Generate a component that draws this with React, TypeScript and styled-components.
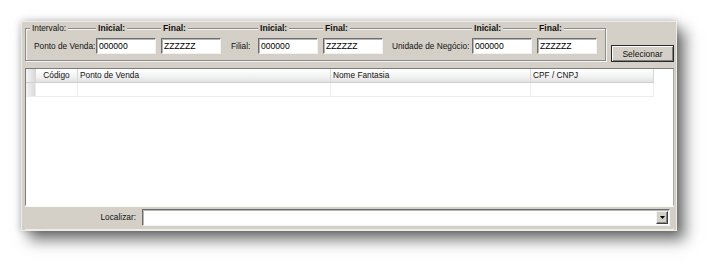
import React from "react";
import styled, { createGlobalStyle } from "styled-components";

const Global = createGlobalStyle`
  html, body { margin: 0; padding: 0; background: #ffffff; }
  body { font-family: "Liberation Sans", Arial, sans-serif; font-size: 8.3px; color: #000; }
  * { box-sizing: border-box; }
`;

const Page = styled.div`
  width: 719px;
  height: 274px;
  padding: 21px 0 0 21px;
  background: #ffffff;
  overflow: hidden;
`;

const Panel = styled.div`
  width: 656px;
  height: 210px;
  background: #d4d0c8;
  border: 1px solid #eeece7;
  padding: 6px 2px 0 3px;
  display: flex;
  flex-direction: column;
  box-shadow: 8px 9px 14px rgba(0, 0, 0, 0.55), 0 0 7px rgba(0, 0, 0, 0.25);
`;

const TopRow = styled.div`
  display: flex;
  align-items: flex-end;
  gap: 5px;
  height: 33px;
`;

const GroupBox = styled.div`
  width: 581px;
  height: 33px;
  border: 1px solid #8a8a8a;
  box-shadow: inset 1px 1px 0 #f6f5f2, 1px 1px 0 #f6f5f2;
  padding: 0 8px 6px 4px;
  display: flex;
  align-items: flex-start;
`;

const Field = styled.div<{ $w: number; $gap?: number }>`
  display: flex;
  flex-direction: column;
  width: ${(p) => p.$w}px;
  margin-left: ${(p) => p.$gap ?? 0}px;
  flex: none;
`;

const Caption = styled.span<{ $bold?: boolean }>`
  align-self: flex-start;
  height: 10px;
  line-height: 10px;
  margin-top: -6px;
  margin-bottom: 5px;
  padding: 0 2px;
  background: #d4d0c8;
  font-weight: ${(p) => (p.$bold ? 700 : 400)};
  font-size: ${(p) => (p.$bold ? "8.6px" : "8.3px")};
  white-space: nowrap;
  color: #111;
`;

const Spacer = styled.span`
  height: 10px;
  margin-top: -6px;
  margin-bottom: 5px;
`;

const Label = styled.span<{ $pl: number }>`
  height: 16px;
  line-height: 16px;
  padding-left: ${(p) => p.$pl}px;
  white-space: nowrap;
  color: #111;
`;

const TextBox = styled.div`
  height: 16px;
  width: 100%;
  background: #ffffff;
  border-top: 1px solid #6e6e6e;
  border-left: 1px solid #6e6e6e;
  border-right: 1px solid #f2f2f2;
  border-bottom: 1px solid #f2f2f2;
  box-shadow: inset 1px 1px 0 #b4b4b4;
  padding-left: 2px;
  line-height: 14px;
  font-size: 8.6px;
  color: #000;
  white-space: nowrap;
  overflow: hidden;
`;

const Button = styled.button`
  width: 63px;
  height: 17px;
  margin-bottom: -1px;
  padding: 0;
  background: #d4d0c8;
  border: 1px solid #2a2a2a;
  box-shadow: inset 1px 1px 0 #ffffff, inset -1px -1px 0 #808080;
  font-family: "Liberation Sans", Arial, sans-serif;
  font-size: 8.5px;
  color: #111;
  text-align: center;
`;

const Grid = styled.div`
  margin-top: 7px;
  flex: 1;
  background: #ffffff;
  border-top: 1px solid #7c7c7c;
  border-left: 1px solid #7c7c7c;
  border-right: 1px solid #a8a8a8;
  border-bottom: 1px solid #ffffff;
  display: flex;
  flex-direction: column;
  min-height: 0;
`;

const Row = styled.div<{ $header?: boolean }>`
  display: flex;
  height: 14px;
  flex: none;
  border-bottom: 1px solid ${(p) => (p.$header ? "#cfcfcf" : "#ededed")};
  width: 628px;
  background: ${(p) => (p.$header ? "linear-gradient(#ffffff, #f3f3f3 55%, #e2e2e2)" : "#ffffff")};
`;

const Cell = styled.div<{ $w: number; $center?: boolean; $indicator?: boolean; $header?: boolean }>`
  width: ${(p) => p.$w}px;
  flex: none;
  border-right: 1px solid ${(p) => (p.$header ? "#d8d8d8" : "#ededed")};
  padding: 0 2px;
  line-height: 13px;
  font-size: 8.3px;
  color: #111;
  text-align: ${(p) => (p.$center ? "center" : "left")};
  white-space: nowrap;
  overflow: hidden;
  background: ${(p) => (p.$indicator ? "linear-gradient(90deg, #f4f4f4, #d9d9d9)" : "transparent")};
`;

const Bar = styled.div`
  height: 24px;
  flex: none;
  background: #d4d0c8;
  border-top: 1px solid #f8f8f6;
  border-bottom: 1px solid #eeece7;
  display: flex;
  align-items: flex-start;
  padding-top: 2px;
`;

const BarLabel = styled.span`
  width: 114px;
  flex: none;
  text-align: right;
  padding-right: 3px;
  line-height: 17px;
  color: #111;
`;

const Combo = styled.div`
  margin-left: 3px;
  width: 528px;
  height: 17px;
  background: #ffffff;
  border-top: 1px solid #6e6e6e;
  border-left: 1px solid #6e6e6e;
  border-right: 1px solid #f2f2f2;
  border-bottom: 1px solid #f2f2f2;
  box-shadow: inset 1px 1px 0 #b4b4b4;
  display: flex;
  justify-content: flex-end;
  align-items: center;
  padding-right: 1px;
`;

const DropButton = styled.div`
  width: 12px;
  height: 13px;
  background: #d4d0c8;
  border-top: 1px solid #f4f4f4;
  border-left: 1px solid #f4f4f4;
  border-right: 1px solid #404040;
  border-bottom: 1px solid #404040;
  box-shadow: inset -1px -1px 0 #8a8a8a;
  display: flex;
  align-items: center;
  justify-content: center;
`;

const cols = [
  { w: 10, t: "", c: false, ind: true },
  { w: 42, t: "Código", c: true },
  { w: 253, t: "Ponto de Venda" },
  { w: 200, t: "Nome Fantasia" },
  { w: 123, t: "CPF / CNPJ" },
];

export default function App() {
  return (
    <>
      <Global />
      <Page>
        <Panel>
          <TopRow>
            <GroupBox>
              <Field $w={66}>
                <Caption>Intervalo:</Caption>
                <Label $pl={4}>Ponto de Venda:</Label>
              </Field>
              <Field $w={60}>
                <Caption $bold>Inicial:</Caption>
                <TextBox>000000</TextBox>
              </Field>
              <Field $w={60} $gap={5}>
                <Caption $bold>Final:</Caption>
                <TextBox>ZZZZZZ</TextBox>
              </Field>
              <Field $w={37}>
                <Spacer />
                <Label $pl={10}>Filial:</Label>
              </Field>
              <Field $w={60}>
                <Caption $bold>Inicial:</Caption>
                <TextBox>000000</TextBox>
              </Field>
              <Field $w={60} $gap={5}>
                <Caption $bold>Final:</Caption>
                <TextBox>ZZZZZZ</TextBox>
              </Field>
              <Field $w={89}>
                <Spacer />
                <Label $pl={9}>Unidade de Negócio:</Label>
              </Field>
              <Field $w={60}>
                <Caption $bold>Inicial:</Caption>
                <TextBox>000000</TextBox>
              </Field>
              <Field $w={60} $gap={5}>
                <Caption $bold>Final:</Caption>
                <TextBox>ZZZZZZ</TextBox>
              </Field>
            </GroupBox>
            <Button>Selecionar</Button>
          </TopRow>
          <Grid>
            <Row $header>
              {cols.map((c, i) => (
                <Cell key={i} $w={c.w} $center={c.c} $indicator={c.ind} $header>
                  {c.t}
                </Cell>
              ))}
            </Row>
            <Row>
              {cols.map((c, i) => (
                <Cell key={i} $w={c.w} $indicator={c.ind} />
              ))}
            </Row>
          </Grid>
          <Bar>
            <BarLabel>Localizar:</BarLabel>
            <Combo>
              <DropButton>
                <svg width="5" height="3" viewBox="0 0 5 3">
                  <path d="M0 0H5L2.5 3Z" fill="#000" />
                </svg>
              </DropButton>
            </Combo>
          </Bar>
        </Panel>
      </Page>
    </>
  );
}
